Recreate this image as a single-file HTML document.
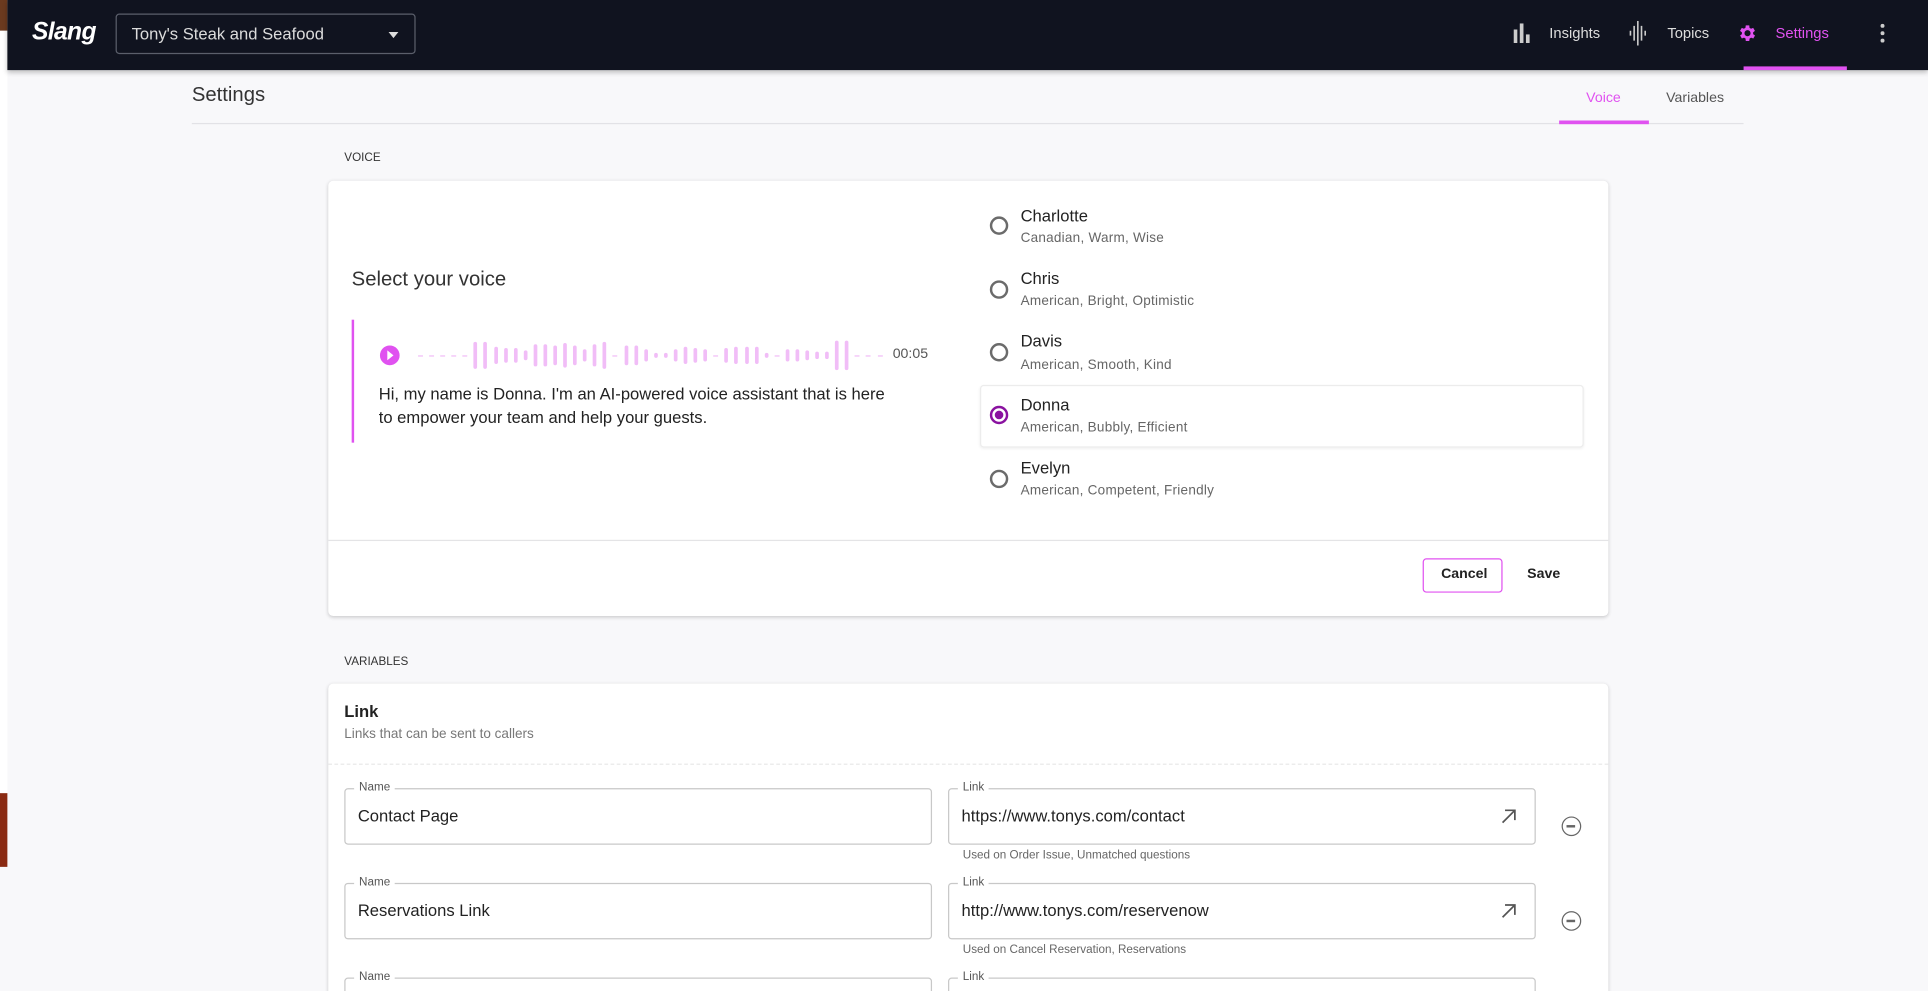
<!DOCTYPE html>
<html><head><meta charset="utf-8">
<style>
*{box-sizing:border-box;margin:0;padding:0}
html,body{width:1928px;height:991px;overflow:hidden;background:#f8f8fa;font-family:"Liberation Sans",sans-serif}
#w{position:absolute;left:0;top:0;width:1568px;height:806px;overflow:hidden;transform:scale(1.2296);transform-origin:0 0;background:#f8f8fa}
.a{position:absolute}
.nav{left:6px;top:0;width:1562px;height:57px;background:#10131f;box-shadow:0 2px 4px rgba(0,0,0,.25)}
.t{white-space:nowrap}
.card{background:#fff;border-radius:4px;box-shadow:0 1px 3px rgba(0,0,0,.18)}
.radio{width:15px;height:15px;border:2px solid #6b6b6b;border-radius:50%}
.nm{font-size:13.5px;color:#222}
.sb{font-size:11px;color:#666;letter-spacing:.2px}
.fld{border:1px solid #c8c8c8;border-radius:3px;height:46px;background:#fff}
.lbl{font-size:9.5px;color:#555;background:#fff;padding:0 4px;top:-7px;left:7px}
.val{font-size:13.5px;color:#222;left:10px;top:14px}
.help{font-size:9.5px;color:#666}
.minus{width:16px;height:16px;border:1.6px solid #666;border-radius:50%}
.minus:after{content:"";position:absolute;left:3px;top:6px;width:7px;height:1.6px;background:#666}
.wf{display:flex;align-items:center;justify-content:space-between}
.wf i{display:block;width:3px;background:#f1bdf7;border-radius:2px}
.wf b{display:block;width:4px;height:1px;background:#f1bdf7}
</style></head><body><div id="w">
<div class="a" style="left:0;top:0;width:6px;height:25px;background:#6b3a1f"></div>
<div class="a" style="left:0;top:645px;width:6px;height:60px;background:#8a2a12"></div>
<div class="a" style="left:0;top:25px;width:6px;height:620px;background:#fff"></div>
<div class="a nav">
 <div class="a t" style="left:20px;top:15px;font-size:20px;font-weight:bold;font-style:italic;color:#fff;letter-spacing:-.5px">Slang</div>
 <div class="a" style="left:88px;top:11px;width:244px;height:33px;border:1px solid #5b5f6b;border-radius:3px">
  <div class="a t" style="left:12px;top:8px;font-size:13.5px;color:#dcdcdc">Tony's Steak and Seafood</div>
  <div class="a" style="left:221px;top:14px;border-left:4px solid transparent;border-right:4px solid transparent;border-top:5px solid #ddd"></div>
 </div>
 <svg class="a" style="left:1225px;top:19px" width="14" height="16" viewBox="0 0 14 16"><rect x="0" y="5" width="3" height="11" fill="#ccc"/><rect x="5" y="0" width="3" height="16" fill="#ccc"/><rect x="10" y="9" width="3" height="7" fill="#ccc"/></svg>
 <div class="a t" style="left:1254px;top:20px;font-size:12px;color:#ddd">Insights</div>
 <svg class="a" style="left:1319px;top:17px" width="16" height="20" viewBox="0 0 16 20"><g stroke="#ccc" stroke-width="1.3"><line x1="1" y1="8" x2="1" y2="12"/><line x1="4" y1="4" x2="4" y2="16"/><line x1="7" y1="0" x2="7" y2="20"/><line x1="10" y1="4" x2="10" y2="16"/><line x1="13" y1="8" x2="13" y2="12"/></g></svg>
 <div class="a t" style="left:1350px;top:20px;font-size:12px;color:#ddd">Topics</div>
 <svg class="a" style="left:1406px;top:18px" width="17" height="18" viewBox="0 0 24 24"><path fill="#e052f0" d="M19.4 13a7.5 7.5 0 0 0 0-2l2.1-1.6-2-3.5-2.5 1a7 7 0 0 0-1.7-1L15 3h-4l-.4 2.9a7 7 0 0 0-1.7 1l-2.5-1-2 3.5L6.6 11a7.5 7.5 0 0 0 0 2l-2.1 1.6 2 3.5 2.5-1a7 7 0 0 0 1.7 1L11 21h4l.4-2.9a7 7 0 0 0 1.7-1l2.5 1 2-3.5zM13 15.5a3.5 3.5 0 1 1 0-7 3.5 3.5 0 0 1 0 7z"/></svg>
 <div class="a t" style="left:1438px;top:20px;font-size:12px;color:#e052f0">Settings</div>
 <div class="a" style="left:1412px;top:54px;width:84px;height:3px;background:#e052f0"></div>
 <svg class="a" style="left:1523px;top:19px" width="4" height="16"><circle cx="2" cy="2" r="1.6" fill="#ccc"/><circle cx="2" cy="8" r="1.6" fill="#ccc"/><circle cx="2" cy="14" r="1.6" fill="#ccc"/></svg>
</div>
<div class="a t" style="left:156px;top:68px;font-size:16.5px;color:#333">Settings</div>
<div class="a" style="left:156px;top:100px;width:1262px;height:1px;background:#e2e2e6"></div>
<div class="a t" style="left:1290px;top:74px;font-size:11.5px;color:#e052f0">Voice</div>
<div class="a" style="left:1268px;top:98px;width:73px;height:3px;background:#e052f0"></div>
<div class="a t" style="left:1355px;top:74px;font-size:11.5px;color:#555">Variables</div>
<div class="a t" style="left:280px;top:123px;font-size:9.5px;color:#333">VOICE</div>

<div class="a card" style="left:267px;top:147px;width:1041px;height:354px">
 <div class="a t" style="left:19px;top:71px;font-size:16.5px;color:#333">Select your voice</div>
 <div class="a" style="left:19px;top:113px;width:2px;height:100px;background:#e052f0"></div>
 <div class="a" style="left:42px;top:134px;width:16px;height:16px;border-radius:50%;background:#e052f0"></div>
 <div class="a" style="left:48px;top:138px;border-top:4px solid transparent;border-bottom:4px solid transparent;border-left:5px solid #fff"></div>
 <div class="a wf" style="left:73px;top:130px;width:378px;height:24px">
  <b></b><b></b><b></b><b></b><b></b>
  <i style="height:22px"></i><i style="height:22px"></i><i style="height:14px"></i><i style="height:12px"></i><i style="height:12px"></i><i style="height:8px"></i><i style="height:18px"></i><i style="height:18px"></i><i style="height:16px"></i><i style="height:20px"></i><i style="height:16px"></i><i style="height:10px"></i><i style="height:18px"></i><i style="height:22px"></i><b></b>
  <i style="height:16px"></i><i style="height:16px"></i><i style="height:10px"></i><i style="height:4px"></i><i style="height:4px"></i><i style="height:10px"></i><i style="height:14px"></i><i style="height:12px"></i><i style="height:10px"></i><b></b>
  <i style="height:12px"></i><i style="height:14px"></i><i style="height:14px"></i><i style="height:14px"></i><i style="height:4px"></i><b></b>
  <i style="height:10px"></i><i style="height:10px"></i><i style="height:8px"></i><i style="height:6px"></i><i style="height:6px"></i><i style="height:24px"></i><i style="height:24px"></i>
  <b></b><b></b><b></b>
 </div>
 <div class="a t" style="left:459px;top:135px;font-size:11.5px;color:#555">00:05</div>
 <div class="a" style="left:41px;top:165px;width:422px;font-size:13.5px;line-height:18.5px;color:#222">Hi, my name is Donna. I'm an AI-powered voice assistant that is here to empower your team and help your guests.</div>
 <div class="a" style="left:530px;top:166px;width:491px;height:51px;border:1px solid #ececec;border-radius:3px;box-shadow:0 1px 2px rgba(0,0,0,.06)"></div>
 <div class="a radio" style="left:538px;top:29px"></div>
 <div class="a t nm" style="left:563px;top:21px">Charlotte</div><div class="a t sb" style="left:563px;top:41px">Canadian, Warm, Wise</div>
 <div class="a radio" style="left:538px;top:81px"></div>
 <div class="a t nm" style="left:563px;top:72px">Chris</div><div class="a t sb" style="left:563px;top:92px">American, Bright, Optimistic</div>
 <div class="a radio" style="left:538px;top:132px"></div>
 <div class="a t nm" style="left:563px;top:123px">Davis</div><div class="a t sb" style="left:563px;top:144px">American, Smooth, Kind</div>
 <div class="a radio" style="left:538px;top:183px;border-color:#8a12a0"></div>
 <div class="a" style="left:542px;top:187px;width:7px;height:7px;border-radius:50%;background:#8a12a0"></div>
 <div class="a t nm" style="left:563px;top:175px">Donna</div><div class="a t sb" style="left:563px;top:195px">American, Bubbly, Efficient</div>
 <div class="a radio" style="left:538px;top:235px"></div>
 <div class="a t nm" style="left:563px;top:226px">Evelyn</div><div class="a t sb" style="left:563px;top:246px">American, Competent, Friendly</div>
 <div class="a" style="left:0;top:292px;width:1041px;height:1px;background:#e4e4e6"></div>
 <div class="a" style="left:890px;top:307px;width:65px;height:28px;border:1px solid #e052f0;border-radius:3px"></div>
 <div class="a t" style="left:905px;top:314px;font-size:11.5px;font-weight:bold;color:#222">Cancel</div>
 <div class="a t" style="left:975px;top:314px;font-size:11.5px;font-weight:bold;color:#222">Save</div>
</div>

<div class="a t" style="left:280px;top:533px;font-size:9.5px;color:#333">VARIABLES</div>
<div class="a card" style="left:267px;top:556px;width:1041px;height:270px">
 <div class="a t" style="left:13px;top:15px;font-size:13.5px;font-weight:bold;color:#222">Link</div>
 <div class="a t" style="left:13px;top:35px;font-size:11px;color:#777">Links that can be sent to callers</div>
 <div class="a" style="left:0;top:65px;width:1041px;border-top:1px dashed #e6e6e6"></div>
</div>
<div class="a fld" style="left:280px;top:641px;width:478px"><div class="a t lbl">Name</div><div class="a t val">Contact Page</div></div>
<div class="a fld" style="left:771px;top:641px;width:478px"><div class="a t lbl">Link</div><div class="a t val">https://www.tonys.com/contact</div>
 <svg class="a" style="left:449px;top:16px" width="12" height="12" viewBox="0 0 12 12"><path d="M1 11L11 1M3 1h8v8" stroke="#555" stroke-width="1.4" fill="none"/></svg></div>
<div class="a t help" style="left:783px;top:690px">Used on Order Issue, Unmatched questions</div>
<div class="a minus" style="left:1270px;top:664px"></div>
<div class="a fld" style="left:280px;top:718px;width:478px"><div class="a t lbl">Name</div><div class="a t val">Reservations Link</div></div>
<div class="a fld" style="left:771px;top:718px;width:478px"><div class="a t lbl">Link</div><div class="a t val">http://www.tonys.com/reservenow</div>
 <svg class="a" style="left:449px;top:16px" width="12" height="12" viewBox="0 0 12 12"><path d="M1 11L11 1M3 1h8v8" stroke="#555" stroke-width="1.4" fill="none"/></svg></div>
<div class="a t help" style="left:783px;top:767px">Used on Cancel Reservation, Reservations</div>
<div class="a minus" style="left:1270px;top:741px"></div>
<div class="a fld" style="left:280px;top:795px;width:478px"><div class="a t lbl">Name</div></div>
<div class="a fld" style="left:771px;top:795px;width:478px"><div class="a t lbl">Link</div></div>
</div></body></html>
